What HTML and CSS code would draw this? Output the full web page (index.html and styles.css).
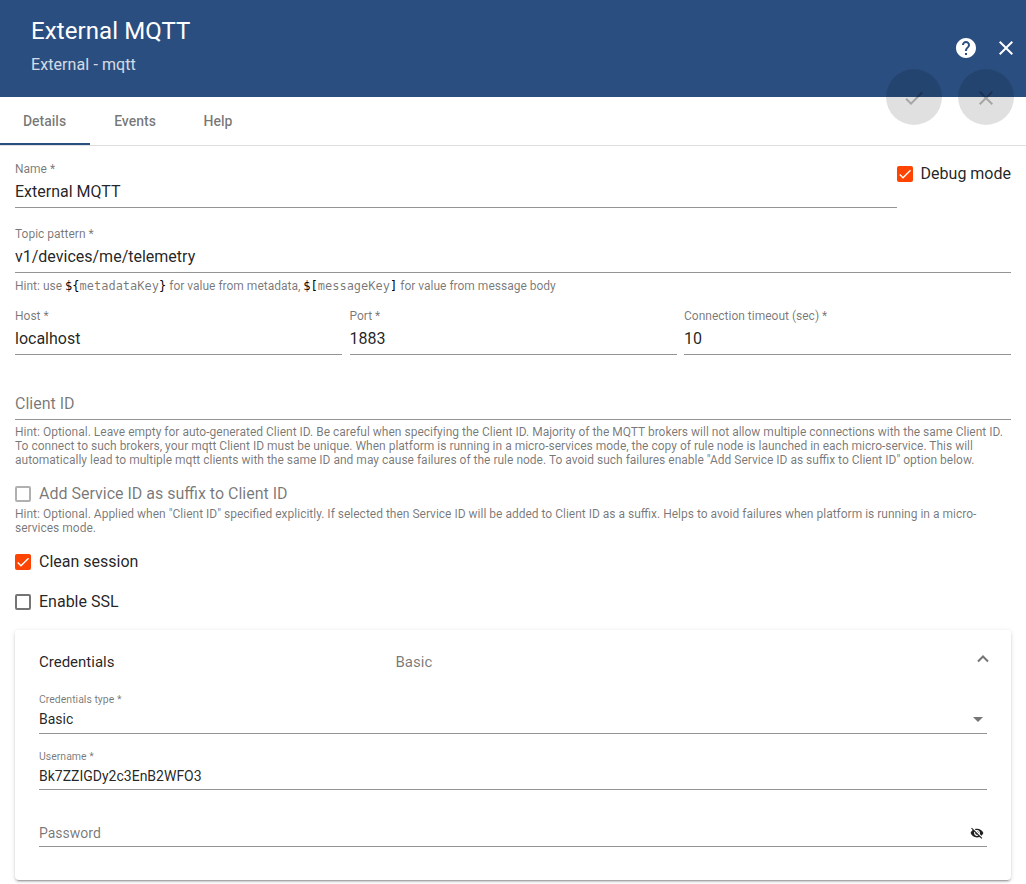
FILE: index.html
```html
<!DOCTYPE html>
<html lang="en">
<head>
<meta charset="utf-8">
<title>External MQTT</title>
<link rel="stylesheet" href="styles.css">
</head>
<body>
<header class="header">
  <div class="heading">
    <h1 class="title">External MQTT</h1>
    <div class="subtitle">External - mqtt</div>
  </div>
  <div class="header-actions">
    <svg class="icon" viewBox="0 0 24 24"><path d="M12 2C6.48 2 2 6.48 2 12s4.48 10 10 10 10-4.48 10-10S17.52 2 12 2zm1 17h-2v-2h2v2zm2.07-7.75l-.9.92C13.45 12.9 13 13.5 13 15h-2v-.5c0-1.1.45-2.1 1.17-2.83l1.24-1.26c.37-.36.59-.86.59-1.41 0-1.1-.9-2-2-2s-2 .9-2 2H8c0-2.21 1.79-4 4-4s4 1.79 4 4c0 .88-.36 1.68-.93 2.25z"/></svg>
    <svg class="icon" viewBox="0 0 24 24"><path d="M19 6.41L17.59 5 12 10.59 6.41 5 5 6.41 10.59 12 5 17.59 6.41 19 12 13.41 17.59 19 19 17.59 13.41 12z"/></svg>
  </div>
  <div class="fabs">
    <div class="fab"><svg class="icon" viewBox="0 0 24 24"><path d="M9 16.17L4.83 12l-1.42 1.41L9 19 21 7l-1.41-1.41z"/></svg></div>
    <div class="fab"><svg class="icon" viewBox="0 0 24 24"><path d="M19 6.41L17.59 5 12 10.59 6.41 5 5 6.41 10.59 12 5 17.59 6.41 19 12 13.41 17.59 19 19 17.59 13.41 12z"/></svg></div>
  </div>
</header>
<nav class="tabs">
  <div class="tab tab-active">Details</div>
  <div class="tab tab-events">Events</div>
  <div class="tab tab-help">Help</div>
</nav>
<main class="content">
  <div class="name-row">
    <div class="field"><div class="label">Name *</div><div class="value">External MQTT</div></div>
    <div class="check debug"><span class="box checked"><svg viewBox="0 0 24 24"><path d="M4.1 12.7 9 17.6 20.3 6.3"/></svg></span>Debug mode</div>
  </div>
  <div class="field topic"><div class="label">Topic pattern *</div><div class="value">v1/devices/me/telemetry</div></div>
  <div class="hint">Hint: use <code><b>${</b>metadataKey<b>}</b></code> for value from metadata, <code><b>$[</b>messageKey<b>]</b></code> for value from message body</div>
  <div class="field-row">
    <div class="field"><div class="label">Host *</div><div class="value">localhost</div></div>
    <div class="field"><div class="label">Port *</div><div class="value">1883</div></div>
    <div class="field"><div class="label">Connection timeout (sec) *</div><div class="value">10</div></div>
  </div>
  <div class="field client"><div class="label"></div><div class="value placeholder">Client ID</div></div>
  <div class="hint">Hint: Optional. Leave empty for auto-generated Client ID. Be careful when specifying the Client ID. Majority of the MQTT brokers will not allow multiple connections with the same Client ID.<br>To connect to such brokers, your mqtt Client ID must be unique. When platform is running in a micro-services mode, the copy of rule node is launched in each micro-service. This will<br>automatically lead to multiple mqtt clients with the same ID and may cause failures of the rule node. To avoid such failures enable "Add Service ID as suffix to Client ID" option below.</div>
  <div class="check suffix"><span class="box"></span>Add Service ID as suffix to Client ID</div>
  <div class="hint suffix-hint">Hint: Optional. Applied when "Client ID" specified explicitly. If selected then Service ID will be added to Client ID as a suffix. Helps to avoid failures when platform is running in a micro-<br>services mode.</div>
  <div class="check clean"><span class="box checked"><svg viewBox="0 0 24 24"><path d="M4.1 12.7 9 17.6 20.3 6.3"/></svg></span>Clean session</div>
  <div class="check ssl"><span class="box"></span>Enable SSL</div>
  <section class="card">
    <div class="card-head">
      <span class="card-title">Credentials</span>
      <span class="card-desc">Basic</span>
      <svg class="chevron" viewBox="0 0 12 8"><path d="M1 6.5 6 1.5 11 6.5"/></svg>
    </div>
    <div class="field small type"><div class="label">Credentials type *</div><div class="value">Basic<svg class="arrow" viewBox="0 0 10 5"><path d="M0 0h10L5 5z"/></svg></div></div>
    <div class="field small user"><div class="label">Username *</div><div class="value">Bk7ZZIGDy2c3EnB2WFO3</div></div>
    <div class="field small password"><div class="label"></div><div class="value placeholder">Password<svg class="eye" viewBox="0 0 24 24"><path d="M12 7c2.76 0 5 2.24 5 5 0 .65-.13 1.26-.36 1.83l2.92 2.92c1.51-1.26 2.7-2.89 3.43-4.75-1.73-4.39-6-7.5-11-7.5-1.4 0-2.74.25-3.98.7l2.16 2.16C10.74 7.13 11.35 7 12 7zM2 4.27l2.28 2.28.46.46C3.08 8.3 1.78 10.02 1 12c1.73 4.39 6 7.5 11 7.5 1.55 0 3.03-.3 4.38-.84l.42.42L19.73 22 21 20.73 3.27 3 2 4.27zM7.53 9.8l1.55 1.55c-.05.21-.08.43-.08.65 0 1.66 1.34 3 3 3 .22 0 .44-.03.65-.08l1.55 1.55c-.67.33-1.41.53-2.2.53-2.76 0-5-2.24-5-5 0-.79.2-1.53.53-2.2zm4.31-.78l3.15 3.15.02-.16c0-1.66-1.34-3-3-3l-.17.01z"/></svg></div></div>
  </section>
</main>
</body>
</html>
```
FILE: styles.css
```css
* { box-sizing: border-box; }
body { margin: 0; height: 884px; overflow: hidden; background: #fff; color: rgba(0,0,0,.87); font: 16px/18px Roboto, "Liberation Sans", sans-serif; }
svg { display: block; flex: none; }
.header { position: relative; display: flex; justify-content: space-between; height: 97px; padding: 17px 8px 0 31px; background: #2a4e80; color: #fff; }
.title { margin: 0; font-size: 24px; line-height: 28px; font-weight: 400; letter-spacing: .1px; }
.subtitle { margin-top: 11px; opacity: .8; letter-spacing: .09px; }
.header-actions { display: flex; gap: 16px; padding-top: 19px; }
.icon { width: 24px; height: 24px; fill: currentColor; }
.fabs { position: absolute; right: 12px; top: 69px; display: flex; gap: 16px; }
.fab { width: 56px; height: 56px; border-radius: 50%; display: flex; align-items: center; justify-content: center; padding-top: 2px; background: rgba(0,0,0,.12); color: rgba(0,0,0,.26); }
.tabs { display: flex; height: 49px; border-bottom: 1px solid #dfdfdf; font-size: 14px; font-weight: 500; line-height: 48px; color: rgba(0,0,0,.54); text-align: center; }
.tab { height: 48px; width: 90px; }
.tab-active { border-bottom: 2px solid #2a4e80; padding-right: 1px; }
.tab-help { width: 76px; }
.content { padding: 16px 15px 0; }
.name-row { display: flex; }
.field { flex: 1 1 0; border-bottom: 1px solid #949494; height: 46px; }
.label { height: 14px; font-size: 12px; line-height: 14px; color: rgba(0,0,0,.54); }
.value { display: flex; align-items: center; margin-top: 7px; }
.placeholder { color: rgba(0,0,0,.54); }
.check { display: flex; align-items: center; gap: 8px; height: 18px; }
.debug { margin-top: 3px; }
.box { width: 16px; height: 16px; border: 2px solid #757575; border-radius: 2px; flex: none; }
.checked { border: 0; background: #ff4300; }
.checked svg { width: 16px; height: 16px; fill: none; stroke: #fff; stroke-width: 2.2; }
.topic { margin-top: 19px; }
.hint { margin-top: 6px; color: rgba(0,0,0,.54); font-size: 12px; line-height: 14px; white-space: nowrap; }
code { font: 12px/12px "DejaVu Sans Mono", monospace; }
code b { font-weight: 400; color: #000; }
.field-row { display: flex; gap: 7.5px; margin-top: 16px; }
.client { margin-top: 19px; }
.client + .hint { margin-top: 5px; }
.suffix { margin-top: 18px; color: rgba(0,0,0,.54); }
.suffix .box { border-color: #b0b0b0; }
.suffix-hint { margin-top: 4px; }
.clean { margin-top: 18px; }
.ssl { margin-top: 22px; }
.card { margin-top: 19px; height: 250px; padding: 23px 24px 0; border-radius: 4px; box-shadow: 0 3px 1px -2px rgba(0,0,0,.2), 0 2px 2px rgba(0,0,0,.14), 0 1px 5px rgba(0,0,0,.12); }
.card-head { display: flex; height: 18px; font-size: 15px; }
.card-title { width: 356.5px; }
.card-desc { flex: 1; color: rgba(0,0,0,.54); }
.chevron { width: 12px; height: 8px; margin: 2px -2px 0 0; fill: none; stroke: #757575; stroke-width: 2; }
.small { font-size: 14px; }
.small .label { height: 12px; font-size: 10.5px; line-height: 12px; }
.small .value { margin-top: 4px; line-height: 18px; }
.type { height: 40px; margin-top: 23px; }
.user { height: 39px; margin-top: 17px; }
.password { height: 41px; margin-top: 16px; }
.password .value { margin-top: 6px; }
.arrow { width: 10px; height: 5px; margin-left: auto; margin-right: 4px; fill: #757575; }
.eye { width: 14px; height: 14px; margin-left: auto; margin-right: 3px; fill: #212121; }
```
